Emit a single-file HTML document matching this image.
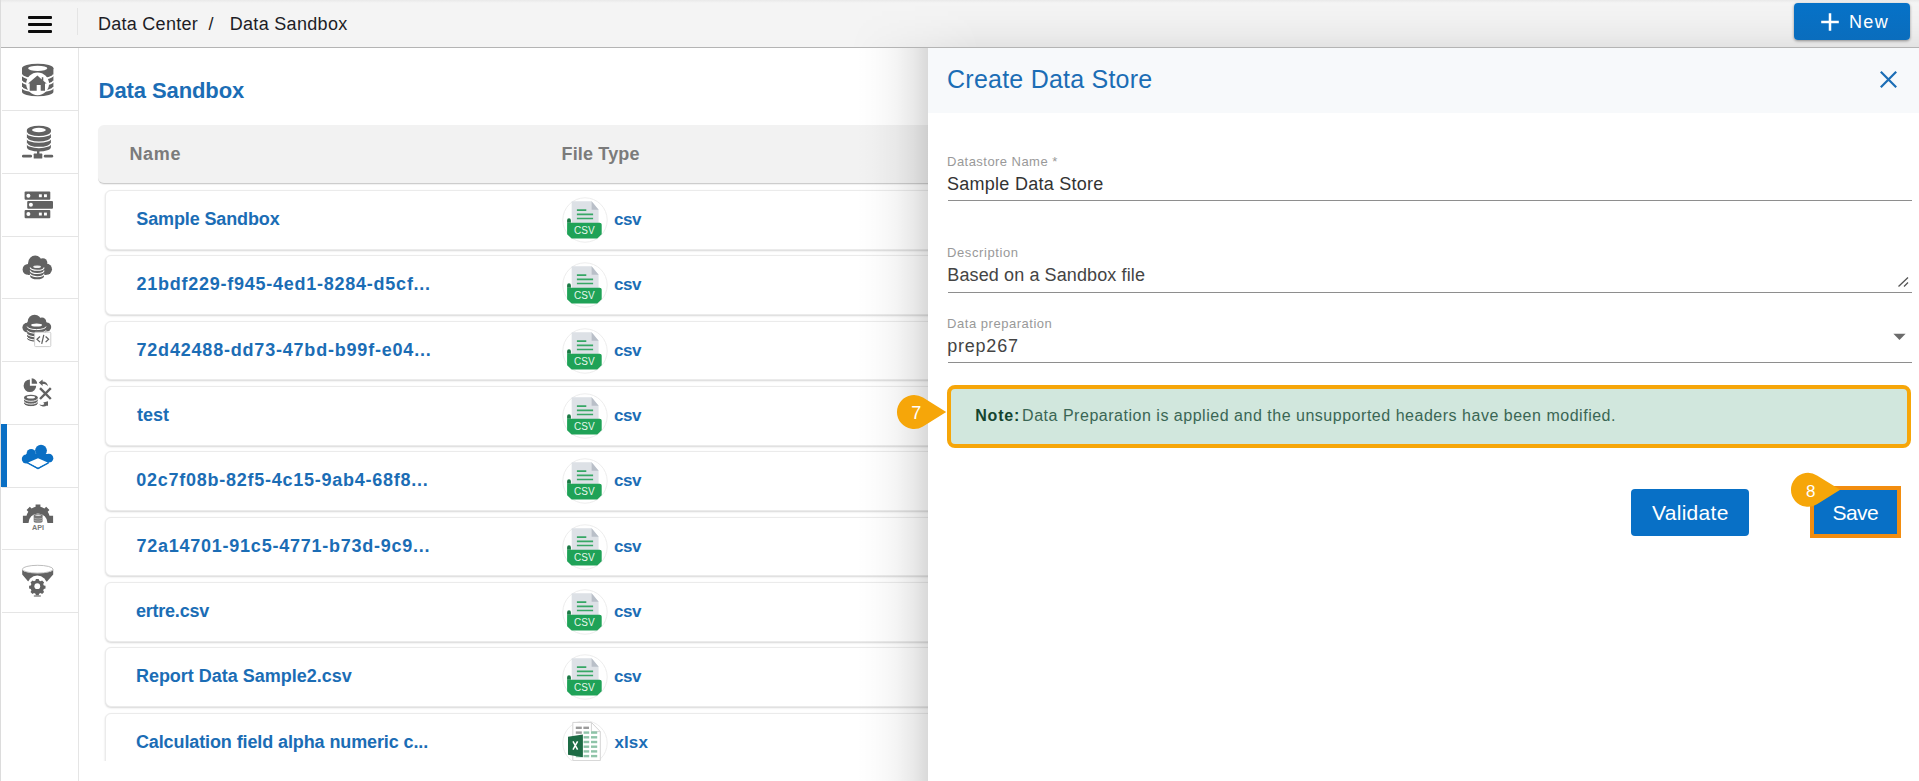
<!DOCTYPE html>
<html>
<head>
<meta charset="utf-8">
<title>Data Sandbox</title>
<style>
*{box-sizing:border-box;margin:0;padding:0}
html,body{width:1919px;height:781px;overflow:hidden;background:#fff;font-family:"Liberation Sans",sans-serif;}
body{position:relative}
.abs{position:absolute}
.t{position:absolute;white-space:pre;line-height:1;font-family:"Liberation Sans",sans-serif;z-index:50}
#topbar{position:absolute;left:0;top:0;width:1919px;height:48px;background:linear-gradient(#e9e9e9 0px,#f4f4f4 3px,#f4f4f4 100%);border-bottom:1px solid #b4b4b4;}
#topshade{position:absolute;left:850px;top:0;width:1069px;height:47px;background:linear-gradient(rgba(0,0,0,0) 8%,rgba(0,0,0,.012) 40%,rgba(0,0,0,.035) 75%,rgba(0,0,0,.065) 100%);-webkit-mask-image:linear-gradient(90deg,transparent 0,#000 130px);mask-image:linear-gradient(90deg,transparent 0,#000 130px)}
#leftedge{position:absolute;left:0;top:0;width:1px;height:781px;background:#dcdcdc;z-index:60}
#ham div{position:absolute;left:28px;width:24px;height:3px;background:#0c0c0c;border-radius:1px}
#hdiv{position:absolute;left:77px;top:8px;width:1px;height:27px;background:#e4e4e4}
#newbtn{position:absolute;left:1794px;top:3px;width:116px;height:37px;background:linear-gradient(#0672c8,#0a6dbd);border-radius:4px;box-shadow:0 1px 3px rgba(0,0,0,.4)}
#sidebar{position:absolute;left:2px;top:48px;width:77px;height:733px;background:#fff;border-right:1px solid #e5e5e5}
.sep{position:absolute;left:2px;width:76px;height:1px;background:#e5e5e5}
#active{position:absolute;left:1px;top:424px;width:6px;height:63px;background:#0a6fc4}
#thead{position:absolute;left:98px;top:125px;width:900px;height:58.5px;background:#f2f2f2;border-radius:6px 0 0 6px;border-bottom:1px solid #cdcdcd;box-shadow:0 1px 1px rgba(0,0,0,.06)}
.row{position:absolute;left:105px;width:900px;height:59.5px;background:#fff;border:1px solid #ebebeb;border-radius:6px 0 0 6px;box-shadow:0 1px 2px rgba(0,0,0,.16)}
#botcover{position:absolute;left:80px;top:761px;width:860px;height:20px;background:#fff}
#shade{position:absolute;left:856px;top:48px;width:72px;height:733px;background:linear-gradient(90deg,rgba(0,0,0,0) 0%,rgba(0,0,0,.012) 25%,rgba(0,0,0,.04) 55%,rgba(0,0,0,.085) 80%,rgba(0,0,0,.15) 100%)}
#panel{position:absolute;left:928px;top:48px;width:991px;height:733px;background:#fff}
#phead{position:absolute;left:0;top:0;width:991px;height:65px;background:#f7f9fb}
.ul{position:absolute;left:20px;width:964px;height:1px;background:#8e8e8e}
#note{position:absolute;left:19px;top:337px;width:964px;height:63px;border:4px solid #f6a609;border-radius:8px;background:#d1e7dd}
.btn{position:absolute;background:#0870c6}
</style>
</head>
<body>
<svg width="0" height="0" style="position:absolute">
 <defs>
  <symbol id="csvicon" viewBox="0 0 46 46">
   <circle cx="23" cy="23" r="22.2" fill="#fff" stroke="#ededed" stroke-width="1"/>
   <g transform="translate(-0.5,-1.4)">
   <path d="M10.2 5.6h19.9l7 8.5v13.5h-26.9z" fill="#dde1e6"/>
   <path d="M30.1 5.6v8.5h7z" fill="#b9bfc8"/>
   <path d="M15.4 14.6h9.4M15.4 18.8h16.2M15.4 22.9h16.2" stroke="#37a765" stroke-width="1.7" fill="none"/>
   <path d="M5.6 24.6a1.7 1.7 0 0 1 3.8 0v2.6h-3.8z" fill="#1b7a45"/>
   <path d="M5.6 27.2h32.6a2 2 0 0 1 2 2v9.5l-4.5 4.2h-25.6l-4.5-4.2z" fill="#1fa257"/>
   <text x="22.9" y="38.9" font-family="Liberation Sans, sans-serif" font-size="10" fill="#e6f6ec" text-anchor="middle">CSV</text>
   </g>
  </symbol>
  <symbol id="xlsicon" viewBox="0 0 46 46">
   <circle cx="23" cy="23" r="22.2" fill="#fff" stroke="#ededed" stroke-width="1"/>
   <g transform="translate(-0.2,-1.8)">
   <path d="M11 4.2h18.6l8.9 9.2v29h-27.5z" fill="#fff" stroke="#d4d4d4" stroke-width="1"/>
   <path d="M29.6 4.2v9.2h8.9" fill="none" stroke="#d4d4d4" stroke-width="1"/>
   <g fill="#9b9b9b"><rect x="14" y="8.4" width="6" height="2.4"/><rect x="21.6" y="8.4" width="5.6" height="2.4"/><rect x="14" y="13.2" width="6" height="2.4"/></g>
   <g fill="#8ec4a8">
    <rect x="21.8" y="13.2" width="5.6" height="2.4"/><rect x="29.2" y="13.2" width="6.2" height="2.4"/>
    <rect x="21.8" y="17.9" width="5.6" height="2.4"/><rect x="29.2" y="17.9" width="6.2" height="2.4"/>
    <rect x="21.8" y="22.6" width="5.6" height="2.4"/><rect x="29.2" y="22.6" width="6.2" height="2.4"/>
    <rect x="21.8" y="27.3" width="5.6" height="2.4"/><rect x="29.2" y="27.3" width="6.2" height="2.4"/>
    <rect x="21.8" y="32" width="5.6" height="2.4"/><rect x="29.2" y="32" width="6.2" height="2.4"/>
    <rect x="21.8" y="36.7" width="5.6" height="2.4"/><rect x="29.2" y="36.7" width="6.2" height="2.4"/>
    <rect x="14" y="36.7" width="6" height="2.4"/>
   </g>
   <path d="M6.2 18.6l14.9-2.2v22.6l-14.9-2.4z" fill="#1d6c45"/>
   <path d="M11.2 23.2l4.6 8.2M15.8 23.2l-4.6 8.2" stroke="#fff" stroke-width="1.5" fill="none"/>
   </g>
  </symbol>
 </defs>
</svg>

<div id="topbar"></div>
<div id="topshade"></div>
<div id="ham"><div style="top:15.7px"></div><div style="top:22.7px"></div><div style="top:29.7px"></div></div>
<div id="hdiv"></div>
<div id="newbtn"><svg class="abs" style="left:26px;top:9px" width="20" height="20" viewBox="0 0 20 20"><path d="M10 1.2v17.6M1.2 10h17.6" stroke="#fff" stroke-width="2.5" fill="none"/></svg></div>

<div id="sidebar"></div>
<div class="sep" style="top:110px"></div>
<div class="sep" style="top:173px"></div>
<div class="sep" style="top:235.5px"></div>
<div class="sep" style="top:298px"></div>
<div class="sep" style="top:361px"></div>
<div class="sep" style="top:423.5px"></div>
<div class="sep" style="top:486.5px"></div>
<div class="sep" style="top:549px"></div>
<div class="sep" style="top:611.5px"></div>
<div id="active"></div>
<svg class="abs" style="left:0;top:48px" width="79" height="572" viewBox="0 48 79 572">
<!-- icon1: database with home -->
<g>
 <path d="M22 68.3v23.4a15.7 4.6 0 0 0 31.4 0v-23.4z" fill="#626262"/>
 <ellipse cx="37.7" cy="68.3" rx="15.7" ry="4.6" fill="#626262"/>
 <ellipse cx="37.7" cy="68.3" rx="9.6" ry="2.6" fill="#fff"/>
 <path d="M22 74.6a15.7 4.6 0 0 0 31.4 0M22 80.8a15.7 4.6 0 0 0 31.4 0M22 87a15.7 4.6 0 0 0 31.4 0" stroke="#fff" stroke-width="1.7" fill="none"/>
 <circle cx="37.6" cy="83.8" r="11.4" fill="#fff"/>
 <path d="M37.4 75.6l4.4 3.8v-2.2h1.5v3.5l3.4 2.9h-1.7v7.2h-4.3v-5.8h-4v5.8h-7v-7.2h-1.6z" fill="#626262"/>
</g>
<!-- icon2: database network -->
<g>
 <path d="M26.9 130v17.2a12 4.3 0 0 0 24 0v-17.2z" fill="#626262"/>
 <ellipse cx="38.9" cy="130" rx="12" ry="4.3" fill="#626262"/>
 <ellipse cx="38.9" cy="130" rx="6.9" ry="2.2" fill="#fff"/>
 <path d="M26.9 132.4a12 4.3 0 0 0 24 0M26.9 137.9a12 4.3 0 0 0 24 0M26.9 143.2a12 4.3 0 0 0 24 0" stroke="#fff" stroke-width="1.3" fill="none"/>
 <rect x="37" y="151" width="2.4" height="3" fill="#626262"/>
 <rect x="33.7" y="153.6" width="8.6" height="5" rx="0.6" fill="#626262"/>
 <rect x="22" y="154.8" width="10" height="2.7" rx="1.3" fill="#626262"/>
 <rect x="43.8" y="154.8" width="9.4" height="2.7" rx="1.3" fill="#626262"/>
</g>
<!-- icon3: servers -->
<g>
 <rect x="24.6" y="191.5" width="25.7" height="8.2" rx="1" fill="#626262"/>
 <rect x="27.2" y="200.9" width="25.8" height="7.8" rx="1" fill="#626262"/>
 <rect x="24.6" y="210" width="25.7" height="8.2" rx="1" fill="#626262"/>
 <g fill="#fff">
  <circle cx="28.4" cy="195.7" r="2"/><rect x="38.9" y="194.3" width="2.9" height="2.9"/><rect x="44" y="194.3" width="2.9" height="2.9"/>
  <circle cx="30.9" cy="204.8" r="2"/>
  <circle cx="28.4" cy="214.1" r="2"/><rect x="38.9" y="212.6" width="2.9" height="2.9"/><rect x="44" y="212.6" width="2.9" height="2.9"/>
 </g>
</g>
<!-- icon4: cloud with db -->
<g>
 <g fill="#626262">
  <circle cx="35.2" cy="262.6" r="7"/><circle cx="42.9" cy="262.6" r="4.4"/>
  <circle cx="28" cy="269.4" r="5.4"/><circle cx="46.4" cy="269.2" r="5.6"/>
  <rect x="28" y="263" width="18.4" height="11.9"/>
  <path d="M30.2 270v6.4a6.9 2.9 0 0 0 13.8 0v-6.4z"/>
 </g>
 <ellipse cx="37.1" cy="266.8" rx="3.9" ry="1.3" fill="#eee"/>
 <path d="M30.2 267.4a6.9 2.9 0 0 0 13.8 0M30.2 270.6a6.9 2.9 0 0 0 13.8 0M30.2 273.8a6.9 2.9 0 0 0 13.8 0" stroke="#fff" stroke-width="1.1" fill="none"/>
</g>
<!-- icon5: cloud db with code -->
<g>
 <g fill="#626262">
  <circle cx="34.6" cy="321.6" r="6.9"/><circle cx="42" cy="321.6" r="4.2"/>
  <circle cx="27.2" cy="327.6" r="4.8"/><circle cx="46.6" cy="327" r="4.6"/>
  <rect x="27.2" y="322" width="19.4" height="9"/>
  <path d="M27.2 325v13.6a9.4 3 0 0 0 18.8 0v-13.6z"/>
 </g>
 <ellipse cx="36.6" cy="325" rx="5.4" ry="1.5" fill="#fff"/>
 <path d="M27.2 326.6a9.4 3 0 0 0 18.8 0M27.2 330.3a9.4 3 0 0 0 18.8 0M27.2 333.8a9.4 3 0 0 0 18.8 0M27.2 337a9.4 3 0 0 0 18.8 0" stroke="#fff" stroke-width="1" fill="none"/>
 <rect x="34.6" y="332.2" width="16.2" height="14.4" rx="1" fill="#fff" stroke="#c8c8c8" stroke-width="0.9"/>
 <path d="M40 336.5l-3 2.8 3 2.8M45.6 336.5l3 2.8-3 2.8M43.8 334.8l-2.1 9" stroke="#626262" stroke-width="1.25" fill="none"/>
</g>
<!-- icon6: pie + db + x + arrows -->
<g>
 <path d="M29.9 379.4a6.3 6.3 0 1 0 6.3 6.3h-6.3z" fill="#626262"/>
 <path d="M31.7 378.3a5.5 5.5 0 0 1 5.5 5.5h-5.5z" fill="#626262"/>
 <g fill="#626262">
  <path d="M24.1 397.4v6.2a6.8 2.7 0 0 0 13.6 0v-6.2z"/>
  <ellipse cx="30.9" cy="397.4" rx="6.8" ry="2.7"/>
 </g>
 <ellipse cx="30.9" cy="397.2" rx="4.2" ry="1.3" fill="#fff"/>
 <path d="M24.1 398.6a6.8 2.7 0 0 0 13.6 0M24.1 401.4a6.8 2.7 0 0 0 13.6 0M24.1 404.1a6.8 2.7 0 0 0 13.6 0" stroke="#fff" stroke-width="0.9" fill="none"/>
 <path d="M40 388.2l10.8 10.8M50.8 388.2l-10.8 10.8" stroke="#626262" stroke-width="2.4" fill="none"/>
 <path d="M38.8 382.6l3.8-3.2v2c3 0 5 1.9 5.4 4.8c-1.3-1.7-3-2.2-5.4-2.2v2z" fill="#626262"/>
 <path d="M48 401.2v4.6h-1.6c-1.6 1-4.8 1-7.2-1.4c2.6 0.8 4 0.6 5.2-0.4l-1.2-1.4z" fill="#626262"/>
</g>
<!-- icon7: blue cloud with layer -->
<g>
 <g fill="#0a6fc4">
  <circle cx="41" cy="450.6" r="5.9"/><circle cx="31.2" cy="453.6" r="4.6"/>
  <circle cx="26.4" cy="459" r="4.6"/><circle cx="48.9" cy="458.2" r="4.4"/>
  <path d="M26 454h23v8.6l-11 6.6l-11.4-6.6z"/>
 </g>
 <path d="M38 458.2l9.8 4.3l-9.8 5.2l-9.9-5.2z" fill="#fff"/>
 <path d="M27.4 463l10.6 5.6l10.6-5.6" stroke="#0a6fc4" stroke-width="1.2" fill="none"/>
</g>
<!-- icon8: gear api -->
<g>
 <path d="M35.6 504.6h4.8v2.2a12 12 0 0 1 4 1.7l1.8-1.8l3.2 3.2l-1.7 1.8a12 12 0 0 1 1.8 4.1h3.6v7.2h-5.6a9 9 0 1 0 -19 0h-5.6v-7.2h3.600a12 12 0 0 1 1.800-4.100l-1.700-1.800l3.200-3.200l1.800 1.800a12 12 0 0 1 4-1.700z" fill="#626262"/>
 <g fill="#777">
  <path d="M33.700 515.400v5.800a4.450 1.600 0 0 0 8.900 0v-5.800z"/>
  <ellipse cx="38.150" cy="515.400" rx="4.450" ry="1.600"/>
 </g>
 <ellipse cx="38.150" cy="515.300" rx="3" ry="0.800" fill="#ddd"/>
 <path d="M33.700 517.400a4.450 1.600 0 0 0 8.900 0M33.700 519.500a4.450 1.600 0 0 0 8.900 0" stroke="#ccc" stroke-width="0.600" fill="none"/>
 <text x="38.100" y="530.400" font-family="Liberation Sans, sans-serif" font-size="7.200" font-weight="bold" fill="#7a7a7a" text-anchor="middle">API</text>
</g>
<!-- icon9: funnel gear -->
<g>
 <path d="M22.200 569.200a15.500 4 0 0 0 31 0v5.200l-6.400 7.400h-18.400l-6.200-7.400z" fill="#626262"/>
 <ellipse cx="37.700" cy="569.200" rx="15.300" ry="3.900" fill="#fff" stroke="#b5b5b5" stroke-width="0.900"/>
 <circle cx="37.300" cy="585.600" r="10" fill="#fff"/>
 <path d="M35.900 579h2.800l0.400 1.600l1.500 0.700l1.500-0.900l2 2l-0.900 1.500l0.600 1.500l1.700 0.400v2.800l-1.700 0.400l-0.600 1.500l0.900 1.500l-2 2l-1.500-0.900l-1.500 0.600l-0.400 1.700h-2.800l-0.400-1.700l-1.500-0.600l-1.500 0.900l-2-2l0.900-1.500l-0.600-1.500l-1.700-0.400v-2.800l1.700-0.400l0.600-1.500l-0.900-1.500l2-2l1.500 0.900l1.500-0.700z" fill="#626262"/>
 <circle cx="37.300" cy="586.200" r="2.900" fill="#fff"/>
 <rect x="33.700" y="595.300" width="7.300" height="1.500" rx="0.700" fill="#8a8a8a"/>
</g>
</svg>


<div id="thead"></div>
<div class="row" style="top:190.00px"></div>
<svg class="abs" style="left:562px;top:197.00px" width="46" height="46" viewBox="0 0 46 46"><use href="#csvicon"/></svg>
<div class="row" style="top:255.33px"></div>
<svg class="abs" style="left:562px;top:262.33px" width="46" height="46" viewBox="0 0 46 46"><use href="#csvicon"/></svg>
<div class="row" style="top:320.67px"></div>
<svg class="abs" style="left:562px;top:327.67px" width="46" height="46" viewBox="0 0 46 46"><use href="#csvicon"/></svg>
<div class="row" style="top:386.00px"></div>
<svg class="abs" style="left:562px;top:393.00px" width="46" height="46" viewBox="0 0 46 46"><use href="#csvicon"/></svg>
<div class="row" style="top:451.33px"></div>
<svg class="abs" style="left:562px;top:458.33px" width="46" height="46" viewBox="0 0 46 46"><use href="#csvicon"/></svg>
<div class="row" style="top:516.66px"></div>
<svg class="abs" style="left:562px;top:523.66px" width="46" height="46" viewBox="0 0 46 46"><use href="#csvicon"/></svg>
<div class="row" style="top:582.00px"></div>
<svg class="abs" style="left:562px;top:589.00px" width="46" height="46" viewBox="0 0 46 46"><use href="#csvicon"/></svg>
<div class="row" style="top:647.33px"></div>
<svg class="abs" style="left:562px;top:654.33px" width="46" height="46" viewBox="0 0 46 46"><use href="#csvicon"/></svg>
<div class="row" style="top:712.66px"></div>
<svg class="abs" style="left:562px;top:719.66px" width="46" height="46" viewBox="0 0 46 46"><use href="#xlsicon"/></svg>
<div id="botcover"></div>

<div id="shade"></div>
<div id="panel">
 <div id="phead"></div>
 <svg class="abs" style="left:951px;top:22px" width="19" height="19" viewBox="0 0 19 19"><path d="M1.8 1.8l15.4 15.4M17.2 1.8l-15.4 15.4" stroke="#1b6db5" stroke-width="2.2" fill="none"/></svg>
 <div class="ul" style="top:152px"></div>
 <div class="ul" style="top:244px"></div>
 <div class="ul" style="top:314px"></div>
 <svg class="abs" style="left:969px;top:228px" width="13" height="12" viewBox="0 0 13 12"><path d="M1.5 10.5l9.5-9M7 10.5l4-4" stroke="#555" stroke-width="1.3" fill="none"/></svg>
 <svg class="abs" style="left:965px;top:285px" width="13" height="8" viewBox="0 0 13 8"><path d="M0.4 0.8h12.2l-6.1 6.2z" fill="#6b6b6b"/></svg>
 <div id="note"></div>
 <div class="btn" style="left:702.5px;top:441px;width:118.5px;height:47px;border-radius:4px"></div>
 <div class="btn" style="left:882px;top:438px;width:91px;height:52px;border:4px solid #f28d10"></div>
</div>
<svg class="abs" style="left:890px;top:390px;z-index:40" width="60" height="44" viewBox="890 390 60 44"><path d="M923 397.6 L946.2 412 L923 426.4 A17 17 0 1 1 923 397.6z" fill="#f6a609"/></svg>
<svg class="abs" style="left:1784px;top:468px;z-index:40" width="60" height="44" viewBox="1784 468 60 44"><path d="M1817 475.4 L1840.2 489.8 L1817 504.2 A17 17 0 1 1 1817 475.4z" fill="#f6a609"/></svg>
<div class="t" style="left:98.10px;top:15.06px;font-size:18px;color:#1d1d26;letter-spacing:0.250px">Data Center</div>
<div class="t" style="left:208.60px;top:15.06px;font-size:18px;color:#1d1d26;letter-spacing:0.000px">/</div>
<div class="t" style="left:229.70px;top:15.06px;font-size:18px;color:#1d1d26;letter-spacing:0.318px">Data Sandbox</div>
<div class="t" style="left:1849.00px;top:13.16px;font-size:18px;color:#fff;letter-spacing:1.350px">New</div>
<div class="t" style="left:98.60px;top:80.37px;font-size:22px;font-weight:bold;color:#1b6db5;letter-spacing:-0.091px">Data Sandbox</div>
<div class="t" style="left:129.40px;top:144.76px;font-size:18px;font-weight:bold;color:#7b7b7b;letter-spacing:0.733px">Name</div>
<div class="t" style="left:561.50px;top:144.76px;font-size:18px;font-weight:bold;color:#7b7b7b;letter-spacing:0.162px">File Type</div>
<div class="t" style="left:947.10px;top:66.93px;font-size:25px;color:#1b6db5;letter-spacing:0.225px">Create Data Store</div>
<div class="t" style="left:947.10px;top:155.29px;font-size:13px;color:#999;letter-spacing:0.453px">Datastore Name *</div>
<div class="t" style="left:947.00px;top:174.76px;font-size:18px;color:#333;letter-spacing:0.269px">Sample Data Store</div>
<div class="t" style="left:947.10px;top:246.29px;font-size:13px;color:#999;letter-spacing:0.580px">Description</div>
<div class="t" style="left:947.30px;top:265.76px;font-size:18px;color:#444;letter-spacing:0.114px">Based on a Sandbox file</div>
<div class="t" style="left:947.10px;top:317.49px;font-size:13px;color:#999;letter-spacing:0.527px">Data preparation</div>
<div class="t" style="left:947.20px;top:337.26px;font-size:18px;color:#444;letter-spacing:0.783px">prep267</div>
<div class="t" style="left:975.25px;top:408.45px;font-size:16px;font-weight:bold;color:#14442f;letter-spacing:0.812px">Note:</div>
<div class="t" style="left:1022.10px;top:408.45px;font-size:16px;color:#3a6654;letter-spacing:0.518px">Data Preparation is applied and the unsupported headers have been modified.</div>
<div class="t" style="left:1652.00px;top:502.02px;font-size:21px;color:#fff;letter-spacing:0.286px">Validate</div>
<div class="t" style="left:1832.50px;top:502.02px;font-size:21px;color:#fff;letter-spacing:-0.533px">Save</div>
<div class="t" style="left:911.25px;top:403.51px;font-size:18px;color:#fff;letter-spacing:0.000px">7</div>
<div class="t" style="left:1805.90px;top:482.61px;font-size:17px;color:#fff;letter-spacing:0.000px">8</div>
<div class="t" style="left:136.30px;top:210.16px;font-size:18px;font-weight:bold;color:#1b6db5;letter-spacing:-0.123px">Sample Sandbox</div>
<div class="t" style="left:614.00px;top:211.01px;font-size:17px;font-weight:bold;color:#1b6db5;letter-spacing:-0.500px">csv</div>
<div class="t" style="left:136.50px;top:275.49px;font-size:18px;font-weight:bold;color:#1b6db5;letter-spacing:0.750px">21bdf229-f945-4ed1-8284-d5cf...</div>
<div class="t" style="left:614.00px;top:276.34px;font-size:17px;font-weight:bold;color:#1b6db5;letter-spacing:-0.500px">csv</div>
<div class="t" style="left:136.50px;top:340.83px;font-size:18px;font-weight:bold;color:#1b6db5;letter-spacing:0.797px">72d42488-dd73-47bd-b99f-e04...</div>
<div class="t" style="left:614.00px;top:341.67px;font-size:17px;font-weight:bold;color:#1b6db5;letter-spacing:-0.500px">csv</div>
<div class="t" style="left:137.00px;top:406.16px;font-size:18px;font-weight:bold;color:#1b6db5;letter-spacing:0.000px">test</div>
<div class="t" style="left:614.00px;top:407.01px;font-size:17px;font-weight:bold;color:#1b6db5;letter-spacing:-0.500px">csv</div>
<div class="t" style="left:136.30px;top:471.49px;font-size:18px;font-weight:bold;color:#1b6db5;letter-spacing:0.740px">02c7f08b-82f5-4c15-9ab4-68f8...</div>
<div class="t" style="left:614.00px;top:472.34px;font-size:17px;font-weight:bold;color:#1b6db5;letter-spacing:-0.500px">csv</div>
<div class="t" style="left:136.50px;top:536.82px;font-size:18px;font-weight:bold;color:#1b6db5;letter-spacing:0.752px">72a14701-91c5-4771-b73d-9c9...</div>
<div class="t" style="left:614.00px;top:537.67px;font-size:17px;font-weight:bold;color:#1b6db5;letter-spacing:-0.500px">csv</div>
<div class="t" style="left:135.90px;top:602.16px;font-size:18px;font-weight:bold;color:#1b6db5;letter-spacing:-0.213px">ertre.csv</div>
<div class="t" style="left:614.00px;top:603.00px;font-size:17px;font-weight:bold;color:#1b6db5;letter-spacing:-0.500px">csv</div>
<div class="t" style="left:135.90px;top:667.49px;font-size:18px;font-weight:bold;color:#1b6db5;letter-spacing:-0.009px">Report Data Sample2.csv</div>
<div class="t" style="left:614.00px;top:668.34px;font-size:17px;font-weight:bold;color:#1b6db5;letter-spacing:-0.500px">csv</div>
<div class="t" style="left:135.90px;top:732.82px;font-size:18px;font-weight:bold;color:#1b6db5;letter-spacing:-0.106px">Calculation field alpha numeric c...</div>
<div class="t" style="left:614.40px;top:733.67px;font-size:17px;font-weight:bold;color:#1b6db5;letter-spacing:0.133px">xlsx</div>
<div id="leftedge"></div>
</body>
</html>
